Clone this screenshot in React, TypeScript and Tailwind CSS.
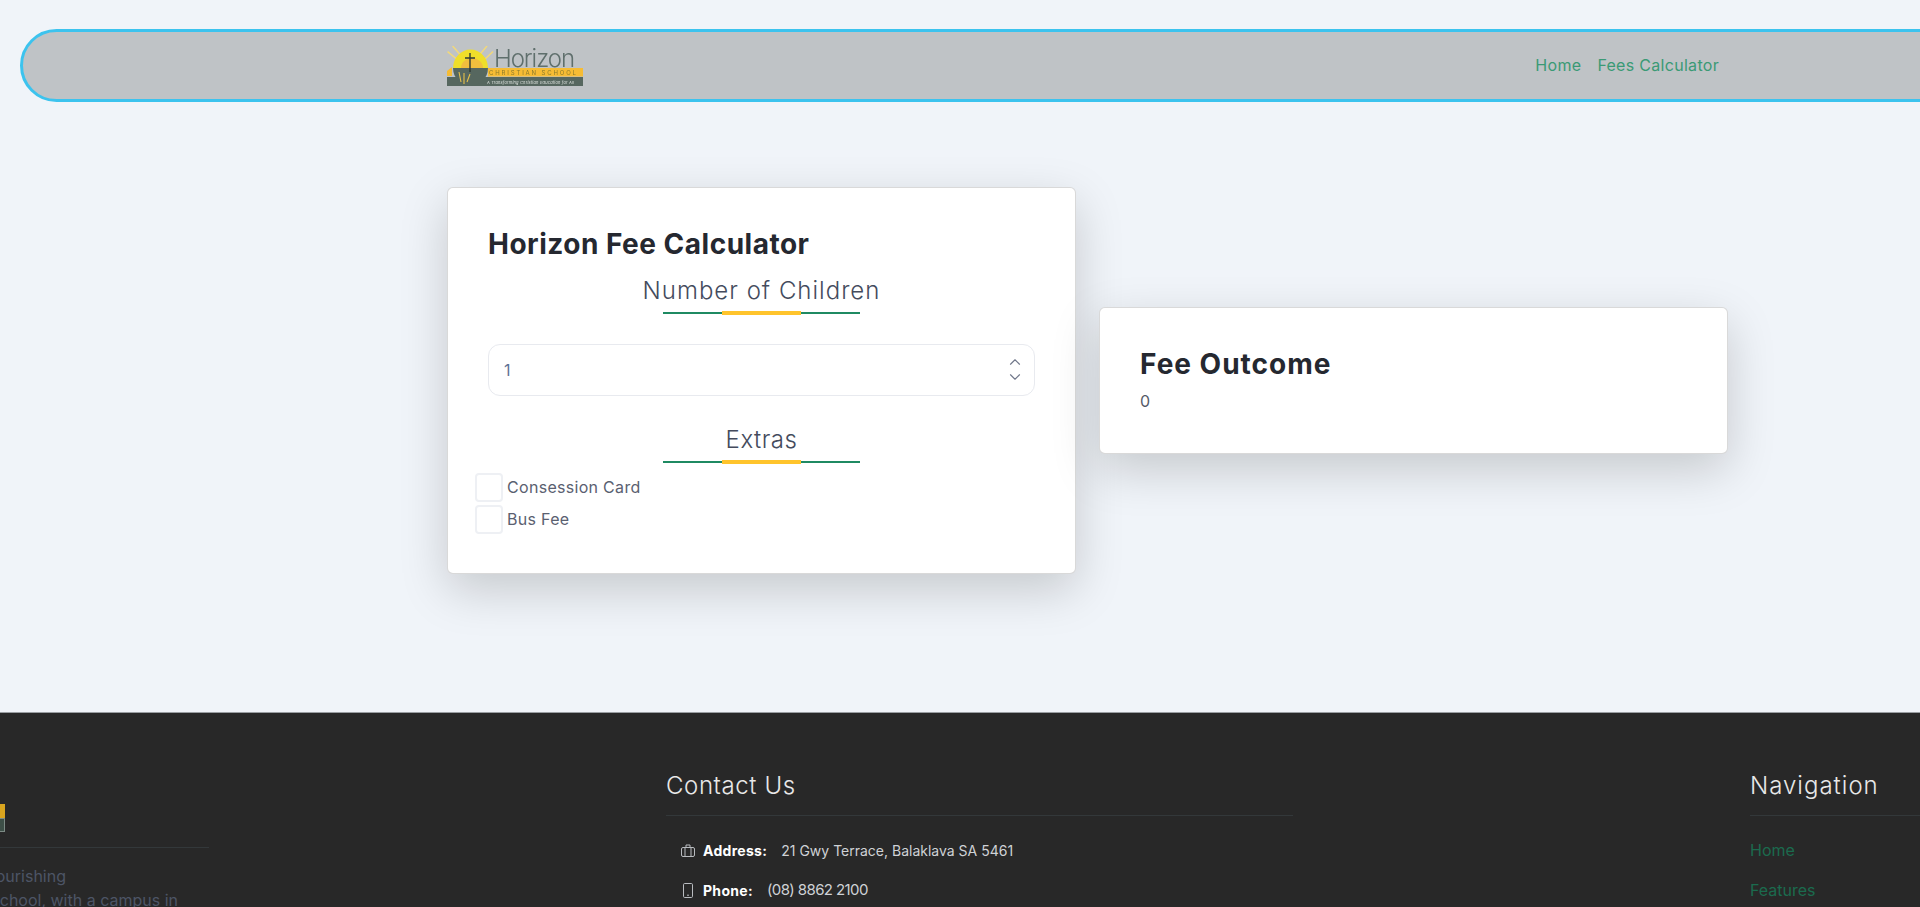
import { ChevronUp, ChevronDown } from "lucide-react";

const poppins = "font-['Inter','Noto_Sans',sans-serif]";

function Logo({ className }: { className?: string }) {
  return (
    <svg viewBox="0 0 136 40" className={className}>
      {/* rays */}
      <g stroke="#f3d978" strokeWidth="1.4">
        <line x1="5.6" y1="0" x2="17" y2="13" />
        <line x1="0.6" y1="5.6" x2="12" y2="15" />
        <line x1="40" y1="0" x2="29" y2="13" />
        <line x1="46" y1="5.6" x2="37" y2="14" />
      </g>
      <path d="M6 22 A17 18 0 0 1 41 22 Z" fill="#efde2a" />
      <path d="M14 22 A10 9 0 0 1 36 22 Z" fill="#f0be3e" />
      <rect x="41" y="22" width="95" height="8.5" fill="#f6bc34" />
      <path d="M0 30 V25 L5 21 V30 Z" fill="#f6bc34" />
      <rect x="0" y="31" width="136" height="9" fill="#56675f" />
      <path d="M6 22 H41 C41 32 33 40 23.5 40 C14 40 6 32 6 22 Z" fill="#56675f" />
      <path d="M14 36 L12 26 M17 38 L17 27 M20 36 L23 28" stroke="#e6c04a" strokeWidth="1.1" fill="none" />
      <path d="M23 7 V26 M18 12 H28" stroke="#2f3a36" strokeWidth="1.4" fill="none" />
      <text x="47" y="21" fontSize="24" fill="#5f6f6c" fontFamily="Inter, sans-serif" fontWeight="300" textLength="81">
        Horizon
      </text>
      <text x="42" y="28.5" fontSize="6" fill="#8a7a2c" fontFamily="Inter, sans-serif" textLength="87">
        CHRISTIAN SCHOOL
      </text>
      <text x="40" y="37.5" fontSize="4" fill="#dfe4e0" fontStyle="italic" fontFamily="Inter, sans-serif" textLength="87">
        A Transforming Christian Education for All
      </text>
    </svg>
  );
}

function BriefcaseIcon() {
  return (
    <svg viewBox="0 0 14 13" className="mr-[8px] h-[13px] w-[14px] text-[#b9bcc0]" fill="none" stroke="currentColor" strokeWidth="1">
      <rect x="0.5" y="3.5" width="13" height="9" rx="1.5" />
      <path d="M5 3.5 V1 H9 V3.5 M4 3.5 V12.5 M10 3.5 V12.5" />
    </svg>
  );
}

function PhoneIcon() {
  return (
    <svg viewBox="0 0 10 15" className="mr-[10px] ml-[2px] h-[15px] w-[10px] text-[#b9bcc0]" fill="none" stroke="currentColor" strokeWidth="1">
      <rect x="0.5" y="0.5" width="9" height="14" rx="1.2" />
      <path d="M4 12.2 H6" />
    </svg>
  );
}

function SectionTitle({ children, wide }: { children: string; wide?: boolean }) {
  return (
    <div className="flex flex-col items-center">
      <h3 className={`font-['Inter',sans-serif] font-light text-[24px] leading-[29px] text-[#444b5d] ${wide ? "tracking-[1px]" : "tracking-[0.5px]"}`}>
        {children}
      </h3>
      <div className="relative mt-[7px] h-[2px] w-[197px] bg-[#1f8a62]">
        <div className="absolute left-[59px] top-[-1px] h-[4px] w-[79px] bg-[#ffc42c]" />
      </div>
    </div>
  );
}

function Check({ label }: { label: string }) {
  return (
    <label className={`flex items-center gap-[4px] ${poppins} text-[16px] tracking-[0.3px] text-[#5a6070]`}>
      <span className="h-[29px] w-[28px] rounded-[4px] border-2 border-[#eef0f4] bg-white" />
      {label}
    </label>
  );
}

export default function App() {
  return (
    <div className="flex h-screen flex-col overflow-hidden bg-[#f0f4f9]">
      <header className="ml-[20px] mt-[29px] flex h-[73px] w-full shrink-0 items-center rounded-l-[37px] border-[3px] border-[#3cc3ee] bg-[#bfc3c6] pl-[424px]">
        <div className="flex w-[1272px] items-center justify-between">
          <Logo className="h-[40px] w-[136px] blur-[0.3px]" />
          <nav className={`-mt-[2px] flex gap-[16px] ${poppins} text-[16px] tracking-[0.3px] text-[#3a9a75]`}>
            <a>Home</a>
            <a>Fees Calculator</a>
          </nav>
        </div>
      </header>

      <main className="flex h-[610px] shrink-0 items-center gap-[23px] pb-[54px] pl-[447px]">
        <section className="h-[387px] w-[629px] rounded-[6px] border border-black/15 bg-white px-[40px] pt-[39px] shadow-[0_16px_48px_rgba(0,0,0,0.175)]">
          <h2 className="font-['Inter',sans-serif] text-[28px] font-bold leading-[34px] tracking-[0.5px] text-[#252830]">Horizon Fee Calculator</h2>
          <div className="mt-[15px]">
            <SectionTitle wide>Number of Children</SectionTitle>
          </div>
          <div className={`mt-[30px] flex h-[52px] items-center justify-between rounded-[12px] border border-[#e8eaef] pl-[15px] pr-[10px] ${poppins} text-[16px] text-[#5d7296]`}>
            <span>1</span>
            <span className="flex flex-col text-[#70778a]">
              <ChevronUp size={18} strokeWidth={1.5} className="-mb-[3px]" />
              <ChevronDown size={18} strokeWidth={1.5} />
            </span>
          </div>
          <div className="mt-[29px]">
            <SectionTitle>Extras</SectionTitle>
          </div>
          <div className="-ml-[13px] mt-[10px] flex flex-col gap-[3px]">
            <Check label="Consession Card" />
            <Check label="Bus Fee" />
          </div>
        </section>

        <section className="h-[147px] w-[629px] rounded-[6px] border border-black/15 bg-white px-[40px] pt-[39px] shadow-[0_16px_48px_rgba(0,0,0,0.175)]">
          <h2 className="font-['Inter',sans-serif] text-[28px] font-bold leading-[34px] tracking-[1px] text-[#252830]">Fee Outcome</h2>
          <p className={`mt-[8px] ${poppins} text-[16px] leading-[24px] text-[#555b68]`}>0</p>
        </section>
      </main>

      <footer className="flex h-[195px] shrink-0 gap-[457px] border-t border-[#9a9ea2] bg-[#282828]">
        <div className="-ml-[418px] w-[627px] shrink-0">
          <div className="flex h-[135px] flex-col items-end justify-end border-b border-[#33383a] pb-[15px]">
            <div className="mr-[204px] h-[28px] w-[36px] shrink-0">
              <div className="h-[14px] bg-[#d9a51f]" />
              <div className="h-[14px] border border-[#7c8a84] bg-[#3d4f47]" />
            </div>
          </div>
          <div className={`mt-[16px] flex flex-col items-end ${poppins} text-[16px] leading-[24px] text-[#4d5566]`}>
            <span className="mr-[143px] whitespace-nowrap">Horizon is a flourishing</span>
            <span className="mr-[31px] whitespace-nowrap">Christian School, with a campus in</span>
          </div>
        </div>

        <div className="w-[627px] shrink-0">
          <h4 className="mt-[58px] font-['Inter',sans-serif] text-[24px] font-light leading-[29px] tracking-[0.6px] text-[#e8e8e8]">Contact Us</h4>
          <div className="mt-[15px] border-t border-[#33383a] pl-[15px] pt-[22px]">
            <div className={`flex h-[24px] items-center ${poppins} text-[14px] text-[#cfd2d6]`}>
              <BriefcaseIcon />
              <b className="mr-[14px] font-bold tracking-[0.3px] text-white">Address:</b>
              21 Gwy Terrace, Balaklava SA 5461
            </div>
            <div className={`mt-[16px] flex h-[24px] items-center ${poppins} text-[15px] tracking-[-0.6px] text-[#cfd2d6]`}>
              <PhoneIcon />
              <b className="mr-[14px] text-[14px] font-bold tracking-[0.3px] text-white">Phone:</b>
              (08) 8862 2100
            </div>
          </div>
        </div>

        <div className="w-[627px] shrink-0">
          <h4 className="mt-[58px] font-['Inter',sans-serif] text-[24px] font-light leading-[29px] tracking-[1px] text-[#e8e8e8]">Navigation</h4>
          <div className={`mt-[15px] flex flex-col gap-[16px] border-t border-[#33383a] pt-[22px] ${poppins} text-[16px] leading-[24px] text-[#1b6b4e]`}>
            <a>Home</a>
            <a>Features</a>
          </div>
        </div>
      </footer>
    </div>
  );
}
